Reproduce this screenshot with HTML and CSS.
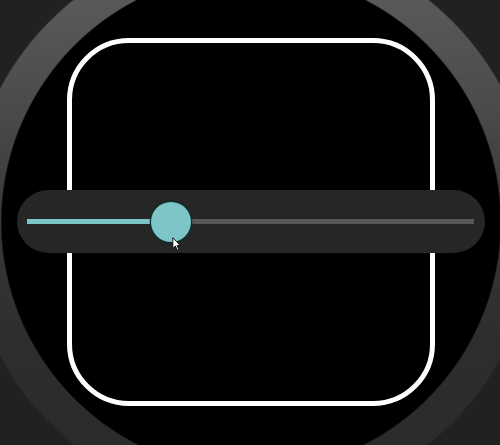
FILE: index.html
```html
<!DOCTYPE html>
<html>
<head>
<meta charset="utf-8">
<link rel="stylesheet" href="styles.css">
</head>
<body>
<div class="stage">
  <div class="frame"></div>
  <div class="slider">
    <div class="track-fill"></div>
    <div class="thumb">
      <svg class="cursor" viewBox="0 0 12 19" width="9" height="14">
        <path d="M1 1 L1 15.5 L4.5 12.2 L7 18 L9.2 17 L6.8 11.4 L11 11.4 Z" fill="#fff" stroke="#000" stroke-width="1.2" stroke-linejoin="round"/>
      </svg>
    </div>
    <div class="track-rest"></div>
  </div>
</div>
</body>
</html>
```
FILE: styles.css
```css
html, body {
  margin: 0;
  padding: 0;
  width: 500px;
  height: 445px;
  overflow: hidden;
  font-family: "Liberation Sans", Arial, sans-serif;
}

body {
  background:
    radial-gradient(circle 285px at 251px 222px, #000 0, #000 249px, rgba(0,0,0,0) 250.5px, rgba(0,0,0,0) 283.5px, #212121 285px),
    linear-gradient(#595959 0%, #4a4a4a 25%, #373737 50%, #2e2e2e 75%, #2b2b2b 100%);
}

.stage {
  width: 500px;
  height: 445px;
  box-sizing: border-box;
  padding: 0 0 2px 2px;
  display: grid;
  place-items: center;
}

.frame,
.slider {
  grid-area: 1 / 1;
}

.frame {
  width: 368px;
  height: 368px;
  box-sizing: border-box;
  border: 5px solid #fff;
  border-radius: 62px;
}

.slider {
  width: 468px;
  height: 63px;
  box-sizing: border-box;
  border-radius: 32px;
  background: #262626;
  padding: 0 11px 0 10px;
  display: flex;
  align-items: center;
}

.track-fill {
  width: 124px;
  height: 5px;
  background: #7cc4c6;
}

.track-rest {
  flex: 1;
  height: 5px;
  background: #575757;
}

.thumb {
  position: relative;
  width: 40px;
  height: 40px;
  flex: none;
  border-radius: 50%;
  background: #7dc5c7;
  box-shadow: 0 0 0 1px #0e2b2c, 0 1px 2px 1px rgba(10, 50, 50, 0.9);
}

.cursor {
  position: absolute;
  left: 21px;
  top: 35px;
}
```
